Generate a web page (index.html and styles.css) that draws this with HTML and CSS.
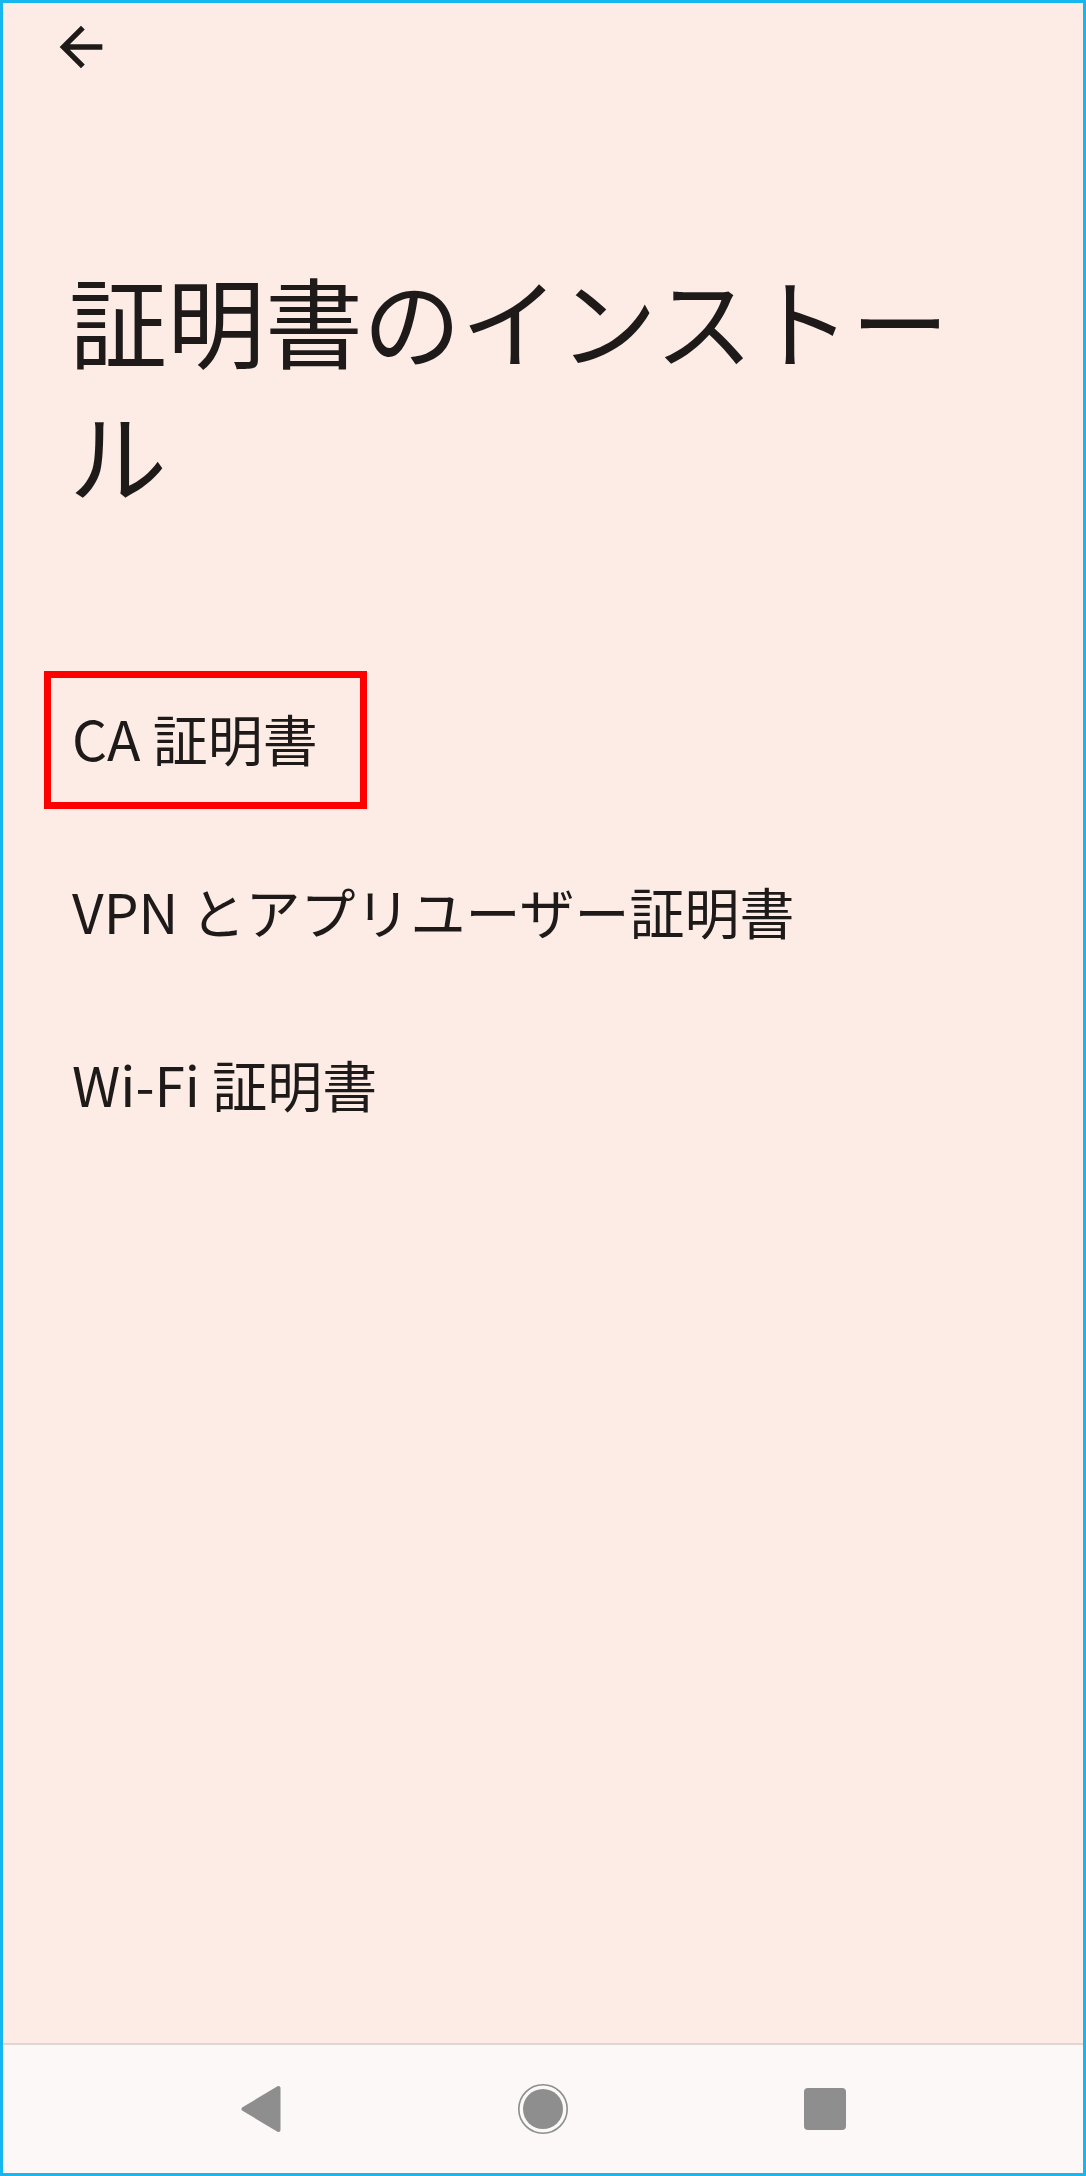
FILE: index.html
```html
<!DOCTYPE html>
<html lang="ja">
<head>
<meta charset="utf-8">
<title>証明書のインストール</title>
<link rel="stylesheet" href="styles.css">
</head>
<body>
<div class="screen">
  <header class="appbar">
    <svg class="back" viewBox="0 0 24 24" width="64" height="64" aria-label="戻る">
      <path d="M20 11H7.83l5.59-5.59L12 4l-8 8 8 8 1.41-1.41L7.83 13H20v-2z"/>
    </svg>
  </header>
  <h1 class="title">証明書のインストール</h1>
  <ul class="list">
    <li class="item item-marked">CA 証明書<span class="mark"></span></li>
    <li class="item">VPN とアプリユーザー証明書</li>
    <li class="item">Wi-Fi 証明書</li>
  </ul>
  <div class="spacer"></div>
  <nav class="navbar">
    <svg class="nav-btn" viewBox="0 0 60 60" width="60" height="60">
      <polygon points="12.5,30 47.5,9 47.5,51" class="nav-shape"/>
    </svg>
    <svg class="nav-btn" viewBox="0 0 60 60" width="60" height="60">
      <circle cx="30" cy="30" r="24.2" class="nav-ring"/>
      <circle cx="30" cy="30" r="20" class="nav-fill"/>
    </svg>
    <svg class="nav-btn" viewBox="0 0 60 60" width="60" height="60">
      <rect x="9" y="9" width="42" height="42" rx="4" class="nav-fill"/>
    </svg>
  </nav>
</div>
</body>
</html>
```
FILE: styles.css
```css
html, body {
  margin: 0;
  padding: 0;
}

body {
  background: #fcece5;
  font-family: "Noto Sans CJK JP", "Noto Sans", sans-serif;
  color: #1e1a19;
}

.screen {
  box-sizing: border-box;
  width: 1086px;
  height: 2176px;
  border: 3px solid #17b6ef;
  background: #fcece5;
  display: flex;
  flex-direction: column;
}

.appbar {
  box-sizing: border-box;
  height: 110px;
  padding: 12px 0 0 46px;
  flex: none;
}

.back {
  display: block;
  fill: #1e1a19;
}

.title {
  margin: 0;
  padding: 138px 66px 0 66px;
  font-size: 98px;
  font-weight: 400;
  line-height: 134px;
  flex: none;
}

.list {
  list-style: none;
  margin: 131px 0 0 0;
  padding: 0;
  flex: none;
}

.item {
  position: relative;
  box-sizing: border-box;
  height: 173px;
  padding-left: 69px;
  display: flex;
  align-items: center;
  font-size: 55px;
  line-height: 80px;
}

.mark {
  position: absolute;
  left: 41px;
  top: 21px;
  width: 323px;
  height: 138px;
  box-sizing: border-box;
  border: 7px solid #ff0000;
}

.spacer {
  flex: 1;
}

.navbar {
  flex: none;
  box-sizing: border-box;
  height: 130px;
  background: #fbf8f7;
  border-top: 2px solid #dfd5d1;
  display: flex;
  justify-content: center;
  align-items: center;
  gap: 222px;
}

.nav-btn {
  display: block;
}

.nav-shape {
  fill: #8e8e8e;
  stroke: #8e8e8e;
  stroke-width: 4;
  stroke-linejoin: round;
}

.nav-fill {
  fill: #8e8e8e;
}

.nav-ring {
  fill: none;
  stroke: #8e8e8e;
  stroke-width: 1.6;
}
```
